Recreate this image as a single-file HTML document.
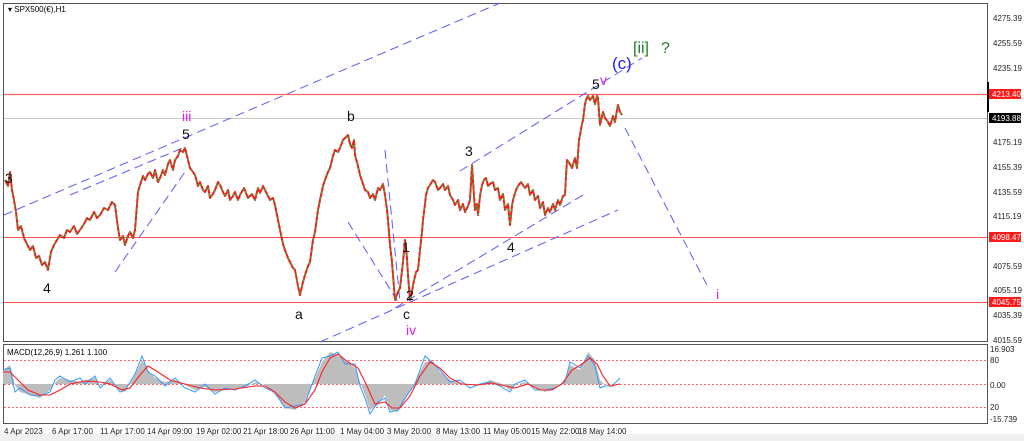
<!DOCTYPE html>
<html><head><meta charset="utf-8"><style>
html,body{margin:0;padding:0;background:#fff;width:1024px;height:441px;overflow:hidden}
svg{display:block;font-family:"Liberation Sans",sans-serif}
</style></head><body>
<svg width="1024" height="441" viewBox="0 0 1024 441" xmlns="http://www.w3.org/2000/svg">
<rect x="0" y="0" width="1024" height="441" fill="#fff"/>
<rect x="0" y="434" width="1024" height="7" fill="#f0f0f0"/>
<rect x="3.5" y="3.5" width="984" height="338" fill="none" stroke="#555" stroke-width="1"/>
<rect x="3.5" y="344.5" width="984" height="79" fill="none" stroke="#555" stroke-width="1"/>
<text x="8" y="12" font-size="8" fill="#000">▾ SPX500(€),H1</text>
<line x1="4" y1="94.5" x2="987" y2="94.5" stroke="#ff6060" stroke-width="1.2"/>
<line x1="4" y1="118.5" x2="987" y2="118.5" stroke="#c8c8c8" stroke-width="1"/>
<line x1="4" y1="237.5" x2="987" y2="237.5" stroke="#ff5050" stroke-width="1"/>
<line x1="4" y1="302.5" x2="987" y2="302.5" stroke="#ff5050" stroke-width="1"/>
<line x1="988" y1="82" x2="988" y2="112" stroke="#000" stroke-width="2"/>
<g stroke="#5a5aff" stroke-width="1" stroke-dasharray="9,5" fill="none">
<line x1="4" y1="215" x2="500" y2="3"/>
<line x1="70" y1="195" x2="185" y2="147"/>
<line x1="115" y1="272" x2="185" y2="172"/>
<line x1="348" y1="222" x2="400" y2="305"/>
<line x1="385" y1="150" x2="400" y2="302"/>
<line x1="395" y1="308" x2="583" y2="195"/>
<line x1="320" y1="342" x2="618" y2="210"/>
<line x1="460" y1="171" x2="642" y2="58"/>
<line x1="625" y1="128" x2="708" y2="287"/>
</g>
<g fill="none" stroke-width="2" stroke-linejoin="round">
<polyline stroke="#e82020" points="5,180 8,186 10,172 12,190 14,200 16,212 18,230 21,226 24,238 27,244 30,250 33,246 36,258 39,256 42,265 45,262 48,270 51,252 54,245 57,240 60,235 64,238 67,230 70,232 74,226 77,234 80,230 84,224 87,218 90,220 94,212 97,218 100,215 104,208 108,210 112,202 115,205 118,228 120,240 123,236 125,245 128,236 130,232 133,238 135,230 138,192 140,185 143,176 145,180 148,174 150,172 153,178 155,170 158,182 160,178 163,170 165,175 168,164 170,160 173,170 175,160 178,156 180,150 183,152 185,148 188,160 190,168 193,172 195,175 198,186 200,182 203,190 205,192 208,186 210,198 213,194 215,190 218,182 220,185 223,192 225,196 228,190 230,200 233,196 235,192 238,200 240,195 244,188 248,198 252,194 255,200 258,188 260,193 263,186 265,190 268,196 270,200 273,198 275,205 278,220 280,230 283,244 285,250 288,258 290,262 293,268 295,270 298,286 300,295 303,282 305,275 308,266 310,262 313,240 315,232 318,210 320,200 323,186 325,180 328,172 330,168 333,156 335,150 338,152 340,148 343,140 345,138 348,135 350,144 352,148 354,140 355,155 358,166 360,175 363,184 365,190 368,192 370,198 373,194 375,200 378,188 380,190 383,184 385,195 387,210 388,220 390,245 392,262 393,275 395,300 398,292 400,288 403,262 405,240 407,258 408,275 410,300 412,292 413,285 416,272 418,270 420,250 422,232 423,220 425,204 426,195 428,188 430,185 433,180 435,182 438,190 440,188 443,184 445,190 448,186 450,195 453,200 455,205 458,200 460,210 463,204 465,212 468,206 470,200 472,165 474,196 475,210 477,204 478,215 480,196 482,185 484,180 486,178 488,186 490,184 493,182 495,190 498,188 500,200 503,194 505,210 508,204 510,225 512,206 513,200 516,190 518,186 521,182 525,188 528,184 530,195 533,190 535,200 538,196 540,208 543,202 545,215 548,208 550,212 553,204 555,210 558,200 560,205 563,196 565,195 566,176 567,160 570,164 572,168 575,158 577,168 579,140 580,135 582,124 583,120 585,104 586,100 588,96 590,100 593,96 595,104 597,96 598,98 600,125 603,112 605,118 608,122 610,126 613,116 615,122 617,110 618,105 620,112 622,115"/>
<polyline stroke="#2ec02e" stroke-width="1.2" stroke-dasharray="2,4" points="5,180 8,186 10,172 12,190 14,200 16,212 18,230 21,226 24,238 27,244 30,250 33,246 36,258 39,256 42,265 45,262 48,270 51,252 54,245 57,240 60,235 64,238 67,230 70,232 74,226 77,234 80,230 84,224 87,218 90,220 94,212 97,218 100,215 104,208 108,210 112,202 115,205 118,228 120,240 123,236 125,245 128,236 130,232 133,238 135,230 138,192 140,185 143,176 145,180 148,174 150,172 153,178 155,170 158,182 160,178 163,170 165,175 168,164 170,160 173,170 175,160 178,156 180,150 183,152 185,148 188,160 190,168 193,172 195,175 198,186 200,182 203,190 205,192 208,186 210,198 213,194 215,190 218,182 220,185 223,192 225,196 228,190 230,200 233,196 235,192 238,200 240,195 244,188 248,198 252,194 255,200 258,188 260,193 263,186 265,190 268,196 270,200 273,198 275,205 278,220 280,230 283,244 285,250 288,258 290,262 293,268 295,270 298,286 300,295 303,282 305,275 308,266 310,262 313,240 315,232 318,210 320,200 323,186 325,180 328,172 330,168 333,156 335,150 338,152 340,148 343,140 345,138 348,135 350,144 352,148 354,140 355,155 358,166 360,175 363,184 365,190 368,192 370,198 373,194 375,200 378,188 380,190 383,184 385,195 387,210 388,220 390,245 392,262 393,275 395,300 398,292 400,288 403,262 405,240 407,258 408,275 410,300 412,292 413,285 416,272 418,270 420,250 422,232 423,220 425,204 426,195 428,188 430,185 433,180 435,182 438,190 440,188 443,184 445,190 448,186 450,195 453,200 455,205 458,200 460,210 463,204 465,212 468,206 470,200 472,165 474,196 475,210 477,204 478,215 480,196 482,185 484,180 486,178 488,186 490,184 493,182 495,190 498,188 500,200 503,194 505,210 508,204 510,225 512,206 513,200 516,190 518,186 521,182 525,188 528,184 530,195 533,190 535,200 538,196 540,208 543,202 545,215 548,208 550,212 553,204 555,210 558,200 560,205 563,196 565,195 566,176 567,160 570,164 572,168 575,158 577,168 579,140 580,135 582,124 583,120 585,104 586,100 588,96 590,100 593,96 595,104 597,96 598,98 600,125 603,112 605,118 608,122 610,126 613,116 615,122 617,110 618,105 620,112 622,115"/>
</g>
<g font-size="14">
<text x="5" y="183" fill="#111">3</text>
<text x="43" y="293" fill="#111">4</text>
<text x="182" y="139" fill="#111">5</text>
<text x="182" y="121" fill="#e020e0">iii</text>
<text x="347" y="121" fill="#111">b</text>
<text x="295" y="319" fill="#111">a</text>
<text x="402" y="252" fill="#111">1</text>
<text x="406" y="300" fill="#111">2</text>
<text x="403" y="319" fill="#111">c</text>
<text x="406" y="335" fill="#e020e0">iv</text>
<text x="465" y="156" fill="#111">3</text>
<text x="507" y="252" fill="#111">4</text>
<text x="592" y="89" fill="#111">5</text>
<text x="600" y="85" fill="#e020e0">v</text>
<text x="716" y="299" fill="#e020e0">i</text>
<text x="612" y="69" fill="#2020ff" font-size="17">(c)</text>
<text x="633" y="53" fill="#208020" font-size="16">[ii]</text>
<text x="661" y="53" fill="#208020" font-size="16">?</text>
</g>
<g font-size="8" fill="#222">
<text x="993" y="21">4275.39</text>
<text x="993" y="46">4255.59</text>
<text x="993" y="71">4235.19</text>
<text x="993" y="145">4175.19</text>
<text x="993" y="170">4155.39</text>
<text x="993" y="195">4135.59</text>
<text x="993" y="219">4115.19</text>
<text x="993" y="269">4075.59</text>
<text x="993" y="293">4055.19</text>
<text x="993" y="318">4035.39</text>
<text x="993" y="343">4015.59</text>
</g>
<rect x="989" y="89" width="32" height="10" fill="#ff1a1a"/>
<text x="992" y="97" font-size="8" fill="#fff">4213.40</text>
<rect x="989" y="113" width="32" height="10" fill="#000"/>
<text x="992" y="121" font-size="8" fill="#fff">4193.88</text>
<rect x="989" y="232" width="32" height="10" fill="#ff1a1a"/>
<text x="992" y="240" font-size="8" fill="#fff">4098.47</text>
<rect x="989" y="297" width="32" height="10" fill="#ff1a1a"/>
<text x="992" y="305" font-size="8" fill="#fff">4045.75</text>
<text x="7" y="355" font-size="8" fill="#000">MACD(12,26,9) 1.261 1.100</text>
<g stroke="#ff3030" stroke-width="0.8" stroke-dasharray="2,2">
<line x1="4" y1="360.5" x2="987" y2="360.5"/>
<line x1="4" y1="384.5" x2="987" y2="384.5"/>
<line x1="4" y1="407.5" x2="987" y2="407.5"/>
</g>
<polygon fill="#bdbdbd" points="3,384 3,370 10,365 15,385 20,392 30,395 40,398 50,390 55,383 60,378 70,380 80,382 85,380 95,378 100,385 110,380 120,390 125,392 135,375 142,360 148,370 155,378 165,382 175,380 185,385 195,390 205,387 215,392 225,390 235,388 245,388 255,382 265,385 275,395 285,408 295,410 305,402 315,378 322,362 330,352 338,355 345,360 355,368 360,382 365,395 370,410 378,405 385,395 390,410 398,412 405,400 415,382 425,362 432,360 440,372 450,380 460,383 470,385 480,385 490,380 500,383 510,390 515,385 525,382 535,387 545,392 555,388 565,380 570,365 580,370 588,352 595,360 600,380 605,385 612,384 620,384"/>
<polyline fill="none" stroke="#3399ff" stroke-width="1" points="3,370 10,368 15,392 20,388 30,395 40,396 50,392 55,380 60,376 70,382 80,378 85,384 95,376 100,388 110,378 120,392 125,390 135,374 142,356 148,372 155,376 165,386 175,378 185,388 195,392 205,384 215,394 225,388 235,390 245,386 255,380 265,388 275,392 285,408 295,406 305,404 315,376 322,358 330,356 338,352 345,364 355,364 360,386 365,398 370,414 378,402 385,398 390,412 398,410 405,398 415,384 425,356 432,362 440,370 450,382 460,380 470,388 480,384 490,382 500,386 510,392 515,384 525,380 535,390 545,390 555,388 565,382 570,362 580,368 588,356 595,366 600,388 605,386 612,386 620,378"/>
<polyline fill="none" stroke="#ff2020" stroke-width="1.1" points="3,372 10,372 18,380 28,390 40,395 50,395 60,390 70,384 85,381 100,382 110,384 122,390 130,388 140,375 148,366 158,372 170,380 185,384 200,388 215,390 235,389 255,386 265,386 275,392 285,402 295,408 305,404 315,390 322,372 330,358 338,354 348,362 358,368 366,384 375,404 385,402 392,408 400,408 410,396 420,376 430,362 440,368 450,378 462,384 478,385 492,383 505,386 515,388 528,384 540,390 552,390 562,384 572,370 582,364 590,358 597,364 603,376 610,386 620,384"/>
<g font-size="8" fill="#222">
<text x="990" y="352">16.903</text>
<text x="990" y="363">80</text>
<text x="990" y="388">0.00</text>
<text x="990" y="410">20</text>
<text x="990" y="422">-15.739</text>
</g>
<g font-size="8" fill="#222">
<text x="4" y="434">4 Apr 2023</text>
<text x="52" y="434">6 Apr 17:00</text>
<text x="100" y="434">11 Apr 17:00</text>
<text x="147" y="434">14 Apr 09:00</text>
<text x="196" y="434">19 Apr 02:00</text>
<text x="243" y="434">21 Apr 18:00</text>
<text x="290" y="434">26 Apr 11:00</text>
<text x="340" y="434">1 May 04:00</text>
<text x="387" y="434">3 May 20:00</text>
<text x="436" y="434">8 May 13:00</text>
<text x="483" y="434">11 May 05:00</text>
<text x="531" y="434">15 May 22:00</text>
<text x="578" y="434">18 May 14:00</text>
</g>
</svg>
</body></html>
